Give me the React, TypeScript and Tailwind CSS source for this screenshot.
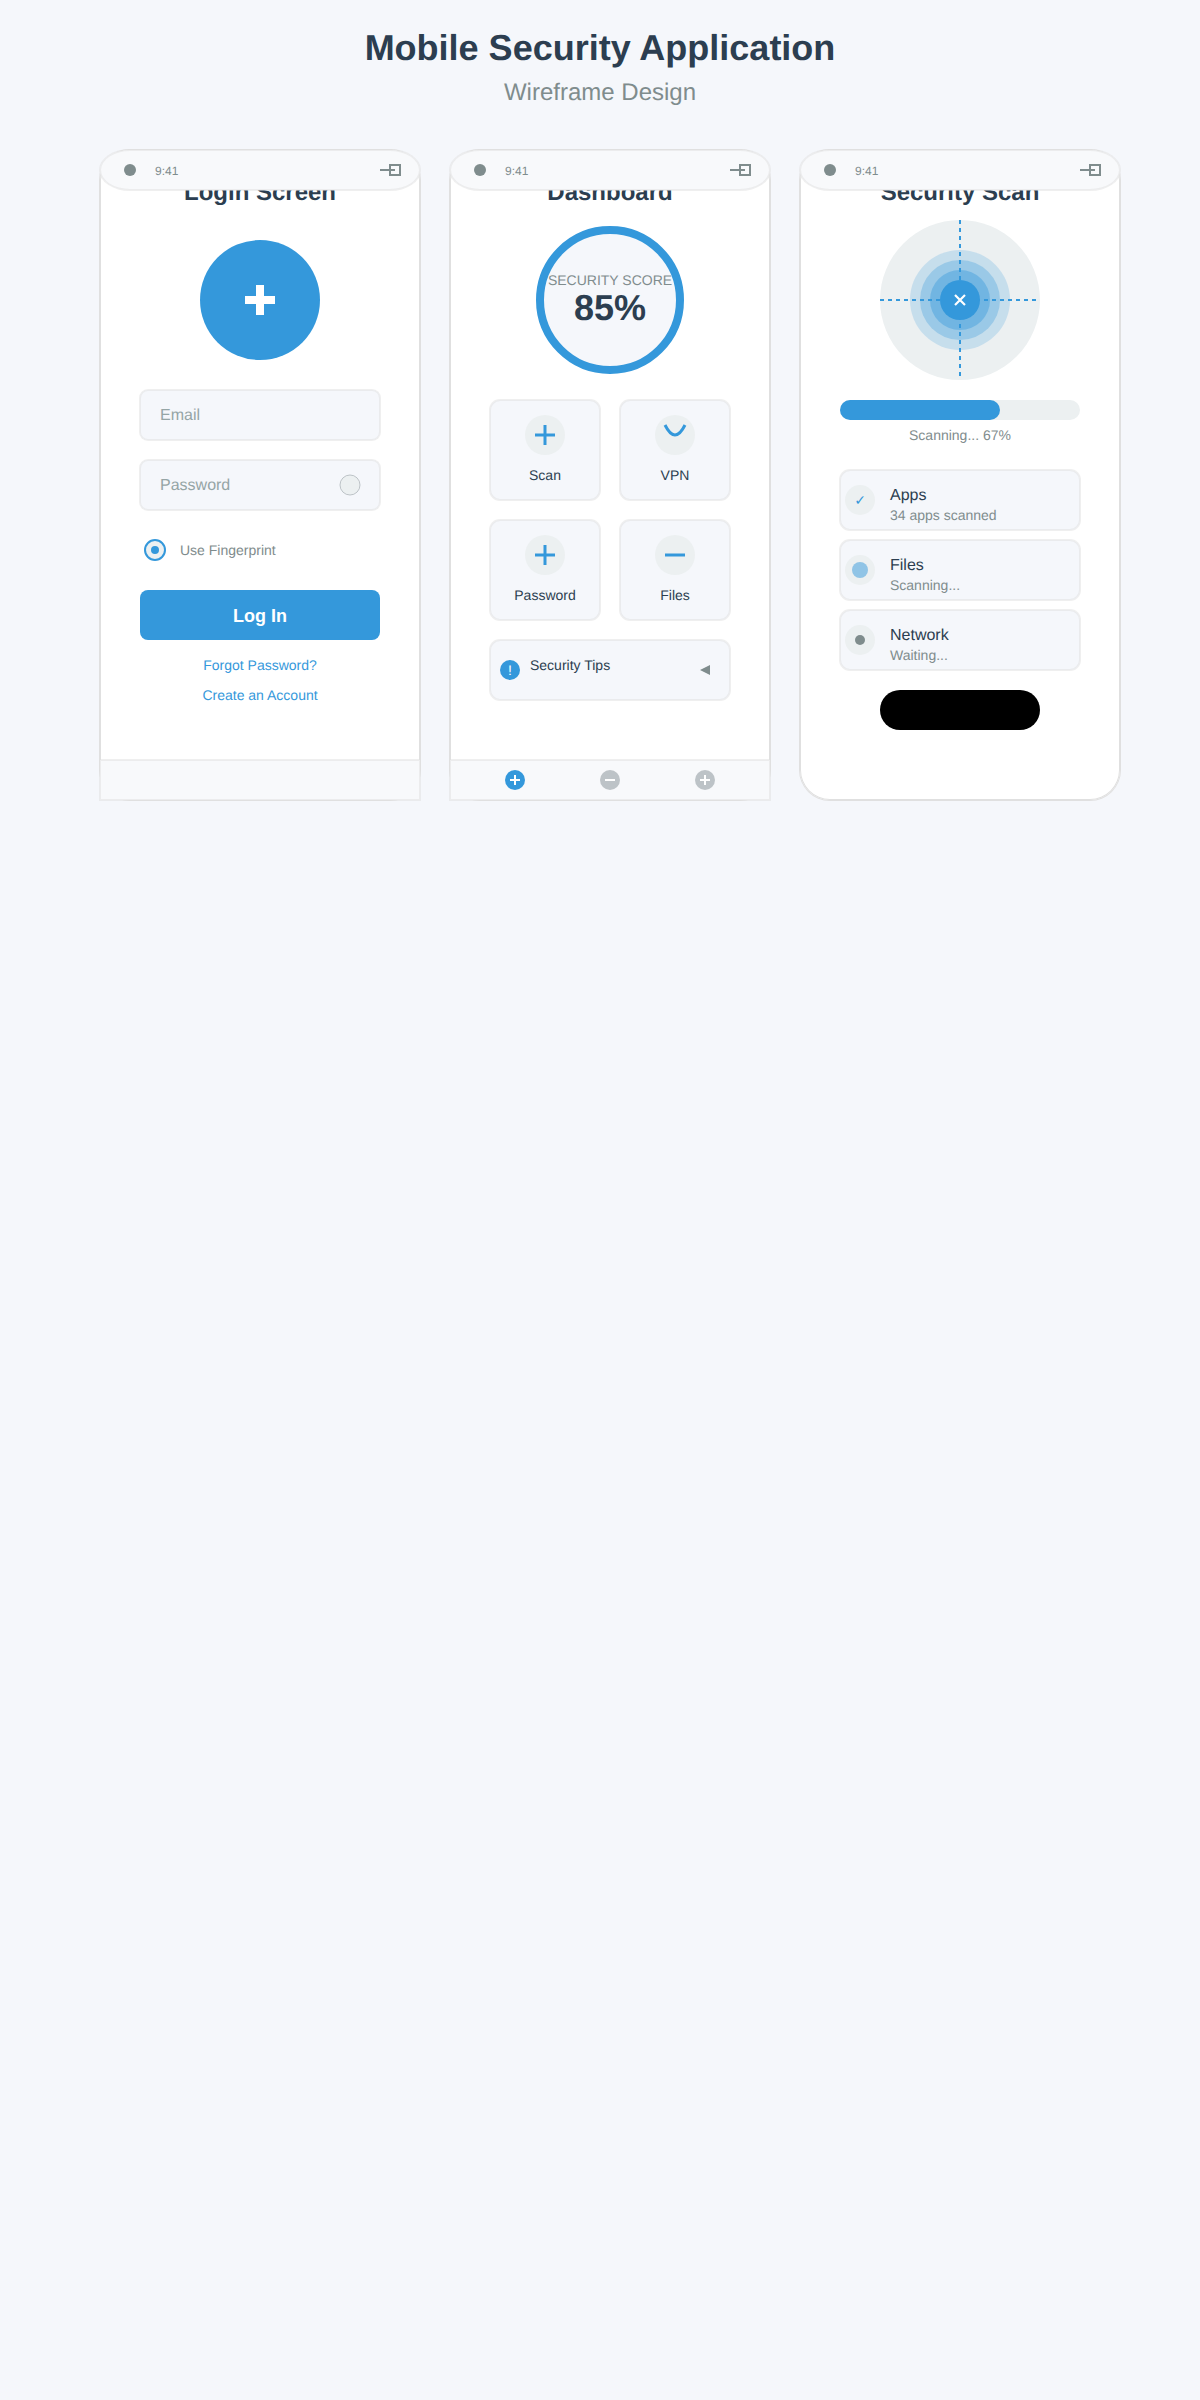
import type { ReactNode } from "react";

const HAIRLINE =
  "shadow-[0_0_0_1px_rgba(224,224,224,0.5),inset_0_0_0_1px_rgba(224,224,224,0.5)]";

function StatusBar() {
  return (
    <div
      className={`relative z-10 flex h-10 w-80 shrink-0 items-center rounded-[30px/20px] bg-[#f8f9fb] pl-6 pr-[19px] text-[#7f8c8d] ${HAIRLINE}`}
    >
      <span className="size-3 rounded-full bg-[#7f8c8d]" />
      <span className="ml-[19px] pt-px text-[12px] leading-[14px]">9:41</span>
      <svg className="ml-auto" width="21" height="12" viewBox="0 0 21 12" fill="none" stroke="#7f8c8d" strokeWidth="2">
        <rect x="10" y="1" width="10" height="10" />
        <path d="M0 6H15" />
      </svg>
    </div>
  );
}

function Phone({ title, nav, children }: { title: string; nav?: ReactNode; children: ReactNode }) {
  return (
    <section className="flex h-[650px] w-80 flex-col rounded-[30px] bg-white shadow-[0_0_0_1px_#e0e0e0,inset_0_0_0_1px_#e0e0e0]">
      <StatusBar />
      <h2 className="-mb-px -mt-[11px] text-center text-[24px] font-bold leading-[27px] text-[#2c3e50]">{title}</h2>
      <div className="flex flex-1 flex-col px-10">{children}</div>
      {nav}
    </section>
  );
}

function BottomNav({ children }: { children?: ReactNode }) {
  return (
    <nav className={`flex h-10 shrink-0 items-center justify-between bg-[#f8f9fb] px-[55px] ${HAIRLINE}`}>
      {children}
    </nav>
  );
}

function NavIcon({ color, d }: { color: string; d: string }) {
  return (
    <svg width="20" height="20" viewBox="0 0 20 20">
      <circle cx="10" cy="10" r="10" fill={color} />
      <path d={d} stroke="#fff" strokeWidth="2" />
    </svg>
  );
}

function Field({ label, children }: { label: string; children?: ReactNode }) {
  return (
    <div className={`flex h-[50px] shrink-0 items-center justify-between rounded-lg bg-[#f5f7fb] pl-5 pr-[19px] ${HAIRLINE}`}>
      <span className="pt-[2px] text-[16px] leading-[22px] text-[#95a5a6]">{label}</span>
      {children}
    </div>
  );
}

function Tile({ label, d }: { label: string; d: string }) {
  return (
    <div className={`flex h-[100px] flex-col items-center rounded-[10px] bg-[#f5f7fb] pt-[15px] ${HAIRLINE}`}>
      <svg width="40" height="40" viewBox="0 0 40 40" fill="none">
        <circle cx="20" cy="20" r="20" fill="#ecf0f1" />
        <path d={d} stroke="#3498db" strokeWidth="3" />
      </svg>
      <span className="mt-[10px] text-[14px] leading-5 text-[#2c3e50]">{label}</span>
    </div>
  );
}

function ScanRow({ name, status, children }: { name: string; status: string; children: ReactNode }) {
  return (
    <div className={`flex h-[60px] items-center rounded-[10px] bg-[#f5f7fb] pl-[5px] ${HAIRLINE}`}>
      <span className="flex size-[30px] items-center justify-center rounded-full bg-[#ecf0f1]">{children}</span>
      <div className="ml-[15px] flex flex-col pt-[9px]">
        <span className="-mb-px pt-px text-[16px] leading-[21px] text-[#2c3e50]">{name}</span>
        <span className="text-[14px] leading-5 text-[#7f8c8d]">{status}</span>
      </div>
    </div>
  );
}

export default function App() {
  return (
    <main className="flex min-h-[2400px] w-[1200px] flex-col bg-[#f5f7fb] font-['Liberation_Sans',Arial,sans-serif] [text-rendering:geometricPrecision]">
      <header className="flex h-[150px] flex-col items-center pt-[27px]">
        <h1 className="text-[36px] font-bold leading-[41px] text-[#2c3e50]">Mobile Security Application</h1>
        <p className="mt-[11px] text-[24px] leading-[27px] text-[#7f8c8d]">Wireframe Design</p>
      </header>

      <div className="flex gap-[30px] pl-[100px]">
        <Phone title="Login Screen" nav={<BottomNav />}>
          <div className="mt-[35px] flex size-[120px] shrink-0 items-center justify-center self-center rounded-full bg-[#3498db]">
            <svg width="30" height="30" viewBox="0 0 30 30">
              <path d="M15 0V30M0 15H30" stroke="#fff" strokeWidth="8" />
            </svg>
          </div>
          <div className="mt-[30px] flex flex-col gap-5">
            <Field label="Email" />
            <Field label="Password">
              <svg width="22" height="22" viewBox="0 0 22 22">
                <circle cx="11" cy="11" r="10" fill="#ecf0f1" stroke="#bdc3c7" />
              </svg>
            </Field>
          </div>
          <div className="mt-[29px] flex items-center pl-1">
            <svg width="22" height="22" viewBox="0 0 22 22">
              <circle cx="11" cy="11" r="10" fill="#ecf0f1" stroke="#3498db" strokeWidth="2" />
              <circle cx="11" cy="11" r="4" fill="#3498db" />
            </svg>
            <span className="ml-[14px] text-[14px] leading-5 text-[#7f8c8d]">Use Fingerprint</span>
          </div>
          <button className="mt-[29px] h-[50px] shrink-0 rounded-lg bg-[#3498db] pt-[2px] text-[18px] font-bold leading-5 text-white">
            Log In
          </button>
          <a className="mt-[15px] text-center text-[14px] leading-5 text-[#3498db]">Forgot Password?</a>
          <a className="mt-[10px] text-center text-[14px] leading-5 text-[#3498db]">Create an Account</a>
        </Phone>

        <Phone
          title="Dashboard"
          nav={
            <BottomNav>
              <NavIcon color="#3498db" d="M10 5V15M5 10H15" />
              <NavIcon color="#bdc3c7" d="M5 10H15" />
              <NavIcon color="#bdc3c7" d="M10 5V15M5 10H15" />
            </BottomNav>
          }
        >
          <div className="mt-[21px] flex size-[148px] shrink-0 flex-col items-center self-center rounded-full border-8 border-[#3498db] bg-[#f5f7fb] pt-9">
            <span className="whitespace-nowrap text-[14px] leading-5 text-[#7f8c8d]">SECURITY SCORE</span>
            <span className="-mt-[3px] text-[36px] font-bold leading-[41px] text-[#2c3e50]">85%</span>
          </div>
          <div className="mt-[26px] grid grid-cols-2 gap-5">
            <Tile label="Scan" d="M20 10V30M10 20H30" />
            <Tile label="VPN" d="M10 10Q20 30 30 10" />
            <Tile label="Password" d="M20 10V30M10 20H30" />
            <Tile label="Files" d="M10 20H30" />
          </div>
          <div className={`mt-5 flex h-[60px] items-center rounded-[10px] bg-[#f5f7fb] pl-[10px] pr-5 ${HAIRLINE}`}>
            <span className="flex size-5 items-center justify-center rounded-full bg-[#3498db] text-[14px] leading-5 text-white">
              !
            </span>
            <span className="ml-[10px] pb-[10px] text-[14px] leading-5 text-[#2c3e50]">Security Tips</span>
            <svg className="ml-auto" width="10" height="10" viewBox="0 0 10 10">
              <path d="M10 0L0 5L10 10Z" fill="#7f8c8d" />
            </svg>
          </div>
        </Phone>

        <Phone title="Security Scan">
          <svg className="mt-[15px] shrink-0 self-center" width="160" height="160" viewBox="0 0 160 160" fill="none">
            <circle cx="80" cy="80" r="80" fill="#ecf0f1" />
            <circle cx="80" cy="80" r="50" fill="#3498db" opacity="0.2" />
            <circle cx="80" cy="80" r="40" fill="#3498db" opacity="0.3" />
            <circle cx="80" cy="80" r="30" fill="#3498db" opacity="0.4" />
            <circle cx="80" cy="80" r="20" fill="#3498db" />
            <path d="M80 0V160M0 80H160" stroke="#3498db" strokeWidth="2" strokeDasharray="4 4" />
            <path d="M75 75L85 85M85 75L75 85" stroke="#fff" strokeWidth="2.2" />
          </svg>
          <div className="mt-5 h-5 shrink-0 rounded-full bg-[#ecf0f1]">
            <div className="h-5 w-40 rounded-full bg-[#3498db]" />
          </div>
          <p className="mt-[5px] text-center text-[14px] leading-5 text-[#7f8c8d]">Scanning... 67%</p>
          <div className="mt-[25px] flex flex-col gap-[10px]">
            <ScanRow name="Apps" status="34 apps scanned">
              <span className="text-[14px] leading-5 text-[#3498db]">✓</span>
            </ScanRow>
            <ScanRow name="Files" status="Scanning...">
              <span className="size-4 rounded-full bg-[#3498db] opacity-50" />
            </ScanRow>
            <ScanRow name="Network" status="Waiting...">
              <span className="size-[10px] rounded-full bg-[#7f8c8d]" />
            </ScanRow>
          </div>
          <div className="mt-5 h-10 w-40 shrink-0 self-center rounded-full bg-black" />
        </Phone>
      </div>
    </main>
  );
}
